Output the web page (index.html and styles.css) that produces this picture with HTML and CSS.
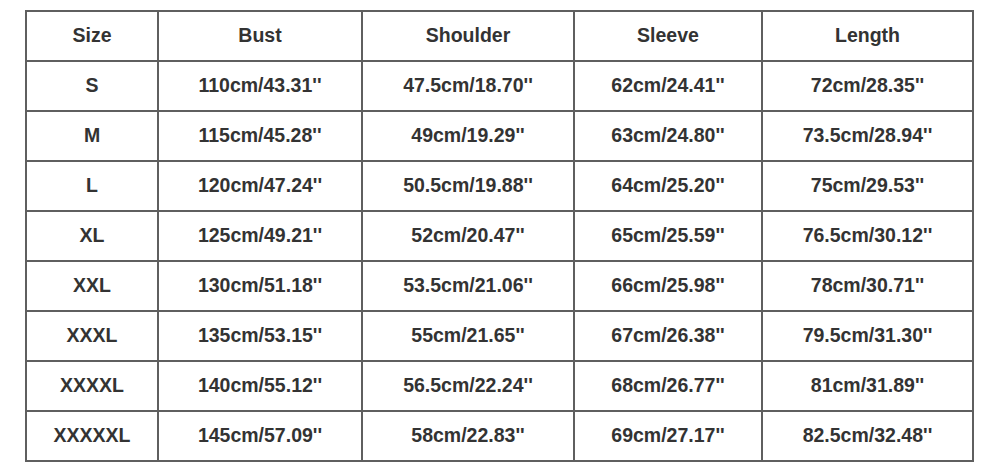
FILE: index.html
```html
<!DOCTYPE html>
<html lang="en">
<head>
<meta charset="utf-8">
<title>Size Chart</title>
<link rel="stylesheet" href="styles.css">
</head>
<body>
<table class="size-table">
  <colgroup>
    <col class="c-size">
    <col class="c-bust">
    <col class="c-shoulder">
    <col class="c-sleeve">
    <col class="c-length">
  </colgroup>
  <thead>
    <tr><th>Size</th><th>Bust</th><th>Shoulder</th><th>Sleeve</th><th>Length</th></tr>
  </thead>
  <tbody>
    <tr><td>S</td><td>110cm/43.31''</td><td>47.5cm/18.70''</td><td>62cm/24.41''</td><td>72cm/28.35''</td></tr>
    <tr><td>M</td><td>115cm/45.28''</td><td>49cm/19.29''</td><td>63cm/24.80''</td><td>73.5cm/28.94''</td></tr>
    <tr><td>L</td><td>120cm/47.24''</td><td>50.5cm/19.88''</td><td>64cm/25.20''</td><td>75cm/29.53''</td></tr>
    <tr><td>XL</td><td>125cm/49.21''</td><td>52cm/20.47''</td><td>65cm/25.59''</td><td>76.5cm/30.12''</td></tr>
    <tr><td>XXL</td><td>130cm/51.18''</td><td>53.5cm/21.06''</td><td>66cm/25.98''</td><td>78cm/30.71''</td></tr>
    <tr><td>XXXL</td><td>135cm/53.15''</td><td>55cm/21.65''</td><td>67cm/26.38''</td><td>79.5cm/31.30''</td></tr>
    <tr><td>XXXXL</td><td>140cm/55.12''</td><td>56.5cm/22.24''</td><td>68cm/26.77''</td><td>81cm/31.89''</td></tr>
    <tr><td>XXXXXL</td><td>145cm/57.09''</td><td>58cm/22.83''</td><td>69cm/27.17''</td><td>82.5cm/32.48''</td></tr>
  </tbody>
</table>
</body>
</html>
```
FILE: styles.css
```css
html, body {
  margin: 0;
  padding: 0;
  background: #ffffff;
}
body {
  padding: 10px 0 0 25px;
  font-family: "Liberation Sans", Arial, sans-serif;
}
.size-table {
  border-collapse: collapse;
  table-layout: fixed;
  width: 949px;
  color: #333333;
  font-size: 19.5px;
  font-weight: bold;
}
.c-size { width: 132px; }
.c-bust { width: 204px; }
.c-shoulder { width: 212px; }
.c-sleeve { width: 188px; }
.c-length { width: 211px; }
.size-table th,
.size-table td {
  border: 2px solid #5f5f5f;
  height: 46px;
  padding: 0 0 2px;
  line-height: 22px;
  text-align: center;
  vertical-align: middle;
  font-weight: bold;
  white-space: nowrap;
}
```
